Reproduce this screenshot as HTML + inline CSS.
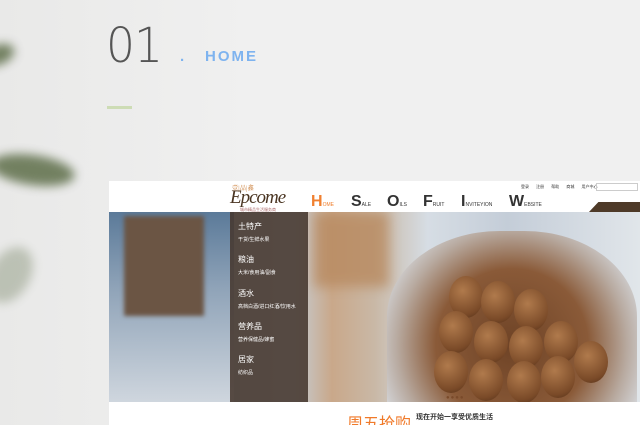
<!DOCTYPE html><html><head><meta charset="utf-8"><style>
*{margin:0;padding:0}
body{width:640px;height:425px;background:#efefef;position:relative;overflow:hidden;font-family:"Liberation Sans","Noto Sans CJK SC",sans-serif}
.a{position:absolute}
.leaf{position:absolute;border-radius:50%;background:#55663f;filter:blur(5px);opacity:.8}
.nut{position:absolute;width:34px;height:42px;border-radius:50%;background:radial-gradient(circle at 40% 35%,#b07a4c,#7a4a28 70%,#4e2e18);}
</style></head><body>
<div class="a" style="left:0;top:0;width:640px;height:425px;background:linear-gradient(90deg,#e9e9e8,#f0f0f0 40%,#f0f0f0)"></div>
<div class="leaf" style="left:-20px;top:45px;width:35px;height:20px;transform:rotate(-20deg)"></div>
<div class="leaf" style="left:-10px;top:155px;width:85px;height:30px;transform:rotate(8deg)"></div>
<div class="leaf" style="left:-10px;top:245px;width:40px;height:60px;opacity:.3;transform:rotate(30deg)"></div>
<div class="a" style="left:106px;top:20px;font-size:48px;color:#555;letter-spacing:-1px;line-height:52px;font-family:'DejaVu Sans','Liberation Sans',sans-serif;font-weight:200;transform:scaleX(.95);transform-origin:left">01</div>
<div class="a" style="left:180px;top:48px;font-size:15px;font-weight:bold;color:#7eb3ef;letter-spacing:2px">.</div>
<div class="a" style="left:205px;top:48px;font-size:15px;font-weight:bold;color:#7eb3ef;letter-spacing:2px">HOME</div>
<div class="a" style="left:107px;top:106px;width:25px;height:3px;background:#cddcb5"></div>
<div class="a" style="left:109px;top:181px;width:531px;height:244px;background:#fff;overflow:hidden">
 <div class="a" style="left:123px;top:2px;font-size:6px;color:#c8772e;font-family:'Noto Serif CJK SC',serif">壹|品|鑫</div>
 <div class="a" style="left:121px;top:6px;font-size:19px;font-style:italic;color:#4a3522;font-family:'Liberation Serif',serif;letter-spacing:-1px">Epcome</div>
 <div class="a" style="left:131px;top:26px;font-size:4px;color:#a66">城市精品生活服务商</div>
 <div class="a" style="left:202px;top:12px;font-size:16px;color:#f08030;font-weight:bold">H<span style="font-size:5px;font-weight:normal">OME</span></div>
 <div class="a" style="left:242px;top:12px;font-size:16px;color:#333;font-weight:bold">S<span style="font-size:5px;font-weight:normal">ALE</span></div>
 <div class="a" style="left:278px;top:12px;font-size:16px;color:#333;font-weight:bold">O<span style="font-size:5px;font-weight:normal">ILS</span></div>
 <div class="a" style="left:314px;top:12px;font-size:16px;color:#333;font-weight:bold">F<span style="font-size:5px;font-weight:normal">RUIT</span></div>
 <div class="a" style="left:352px;top:12px;font-size:16px;color:#333;font-weight:bold">I<span style="font-size:5px;font-weight:normal">NVITEYION</span></div>
 <div class="a" style="left:400px;top:12px;font-size:16px;color:#333;font-weight:bold">W<span style="font-size:5px;font-weight:normal">EBSITE</span></div>
 <div class="a" style="left:412px;top:3px;font-size:4px;color:#333;word-spacing:6px">登录 注册 帮助 商城 用户中心</div>
 <div class="a" style="left:487px;top:2px;width:40px;height:6px;border:1px solid #ccc"></div>
 <div class="a" style="left:479px;top:21px;width:52px;height:11px;background:#4e3a28;clip-path:polygon(20% 0,100% 0,100% 100%,0 100%)"></div>
 <div class="a" style="left:0;top:31px;width:531px;height:190px;overflow:hidden;background:linear-gradient(90deg,#6a7f95 0%,#aab7c5 15%,#c6ccd2 35%,#c9a88a 42%,#c9b8a6 50%,#d6dde4 60%,#c4cdd8 75%,#e1e6ea 100%)">
 <div class="a" style="left:0;top:0;width:125px;height:190px;background:linear-gradient(180deg,#5b7a99 0%,#8fa3b8 40%,#cfd6de 100%)"></div>
 <div class="a" style="left:15px;top:4px;width:80px;height:100px;background:#6b5544;filter:blur(2px)"></div>
 <div class="a" style="left:205px;top:0;width:75px;height:75px;background:#b88a60;filter:blur(6px);opacity:.8"></div>
 <div class="a" style="left:278px;top:19px;width:250px;height:190px;border-radius:45% 45% 0 0;background:radial-gradient(circle at 50% 60%,#6e4326 0,#8a5a38 45%,#b8aaa0 68%,#d9dde2 85%)"></div>
 <div class="nut" style="left:340px;top:64px"></div>
 <div class="nut" style="left:372px;top:69px"></div>
 <div class="nut" style="left:405px;top:77px"></div>
 <div class="nut" style="left:330px;top:99px"></div>
 <div class="nut" style="left:365px;top:109px"></div>
 <div class="nut" style="left:400px;top:114px"></div>
 <div class="nut" style="left:435px;top:109px"></div>
 <div class="nut" style="left:325px;top:139px"></div>
 <div class="nut" style="left:360px;top:147px"></div>
 <div class="nut" style="left:398px;top:149px"></div>
 <div class="nut" style="left:432px;top:144px"></div>
 <div class="nut" style="left:465px;top:129px"></div>
 <div class="a" style="left:121px;top:0;width:78px;height:190px;background:rgba(70,55,45,.88)"></div>
 <div class="a" style="left:337px;top:184px;font-size:6px;color:#7a4a2a;letter-spacing:1px;line-height:5px">●●●●</div>
 </div>
 <div class="a" style="left:129px;top:40px;color:#fff;font-size:8px;line-height:12px">土特产<br><span style="font-size:5px">干货/生鲜水果</span></div>
 <div class="a" style="left:129px;top:73px;color:#fff;font-size:8px;line-height:12px">粮油<br><span style="font-size:5px">大米/食用油/副食</span></div>
 <div class="a" style="left:129px;top:107px;color:#fff;font-size:8px;line-height:12px">酒水<br><span style="font-size:5px">高档白酒/进口红酒/饮用水</span></div>
 <div class="a" style="left:129px;top:140px;color:#fff;font-size:8px;line-height:12px">营养品<br><span style="font-size:5px">营养保健品/蜂蜜</span></div>
 <div class="a" style="left:129px;top:173px;color:#fff;font-size:8px;line-height:12px">居家<br><span style="font-size:5px">纺织品</span></div>
 <div class="a" style="left:238px;top:229px;font-size:16px;color:#f07a2a">周五抢购</div>
 <div class="a" style="left:307px;top:231px;font-size:7px;color:#333;font-weight:bold">现在开始一享受优质生活</div>
</div>
</body></html>
